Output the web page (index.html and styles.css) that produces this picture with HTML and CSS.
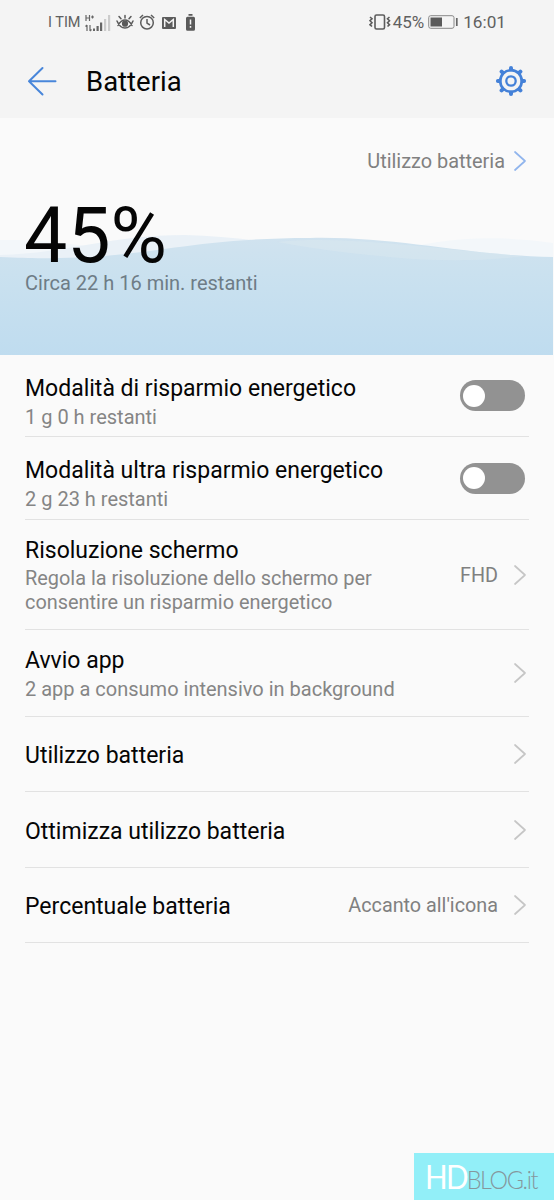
FILE: index.html
```html
<!DOCTYPE html>
<html lang="it">
<head>
<meta charset="utf-8">
<title>Batteria</title>
<link rel="stylesheet" href="styles.css">
</head>
<body>
<div class="screen">
  <header class="top">
    <div class="status">
      <div class="status-left">
        <span class="carrier">I TIM</span>
        <svg class="i-signal" width="26" height="18" viewBox="0 0 26 18"><g fill="none" stroke="#666" stroke-width="1.200"><path d="M1 1v6M4.500 1v6M1 4h3.500M6 3h3M7.500 1.500v3M2 11v6M.5 12.500 2 11M5 11v6M6.500 15.500 5 17"/></g><path fill="#666" d="M8 14.500h2V17H8zM11.500 12h2.200v5h-2.200zM15 8.500h2.200V17H15z"/><path fill="#ccc" d="M19 5h2.200v12H19zM23 1h2.200v16H23z"/></svg>
        <svg class="i-eye" width="18" height="16" viewBox="0 0 18 16"><g fill="none" stroke="#5a5a5a" stroke-width="1.500" stroke-linecap="round"><path d="M1 7q3 7 8 7t8-7M2 11.500Q5 6 9 6t7 5.500M9 4V1.500M5 4.800 3 2.500M13 4.800 15 2.500"/></g><circle cx="9" cy="9.700" r="3.100" fill="#5a5a5a"/></svg>
        <svg class="i-alarm" width="16" height="16" viewBox="0 0 16 16"><g fill="none" stroke="#5c5c5c" stroke-width="1.500"><circle cx="8" cy="8.700" r="6.300"/><path d="M8 5v4.200l3 1.800M.8 4 4 1M15.200 4 12 1"/></g></svg>
        <svg class="i-mail" width="14" height="12" viewBox="0 0 14 12"><rect width="14" height="12" rx="1" fill="#5c5c5c"/><path d="M2.700 10V2.500L7 6l4.300-3.500V10" fill="none" stroke="#f4f4f4" stroke-width="1.500"/></svg>
        <svg class="i-bat" width="9" height="17" viewBox="0 0 9 17"><path fill="#5a5a5a" d="M2.500 0h4v1.800h-4zM1.500 2.700h6q1.500 0 1.500 1.500v11q0 1.500-1.500 1.500h-6Q0 16.700 0 15.200v-11q0-1.500 1.500-1.500z"/><path stroke="#f4f4f4" stroke-width="1.500" d="M4.500 5.500v5M4.500 12v1.700"/></svg>
      </div>
      <div class="status-right">
        <svg class="i-vib" width="22" height="16" viewBox="0 0 22 16"><g fill="none" stroke="#5c5c5c" stroke-width="1.600"><rect x="6" y="1" width="9.500" height="14" rx="1.500"/><path d="M1 3l2 1.700-2 2 2 2-2 2 2 1.800M20.500 3l-2 1.700 2 2-2 2 2 2-2 1.800"/></g></svg>
        <span class="pct">45%</span>
        <svg class="i-level" width="30" height="14" viewBox="0 0 30 14"><rect x=".7" y=".7" width="25.300" height="12.600" rx="2" fill="none" stroke="#888"/><rect x="2.500" y="2.500" width="11.500" height="9" fill="#5a5a5a"/><path d="M28.800 3v8" stroke="#666" stroke-width="1.700"/></svg>
        <span class="clock">16:01</span>
      </div>
    </div>
    <div class="bar">
      <svg class="i-back" width="30" height="30" viewBox="0 0 30 30"><path d="M15.500 2 2 15.200 15.500 28.500M2 15.200h26.500" fill="none" stroke="#4886da" stroke-width="2" stroke-linecap="round" stroke-linejoin="round"/></svg>
      <h1>Batteria</h1>
      <svg class="i-gear" width="32" height="32" viewBox="-16 -16 32 32"><g fill="none" stroke="#4481d8"><circle r="10.800" stroke-width="2.700"/><circle r="4.700" stroke-width="2.300"/><path stroke-width="4" stroke-linecap="round" d="M0-11.500v-1.600M0 11.500v1.600M-11.500 0h-1.600M11.500 0h1.600M-8.300-8.300l-1.100-1.100M8.300-8.300l1.100-1.100M-8.300 8.300l-1.100 1.100M8.300 8.300l1.100 1.100"/></g></svg>
    </div>
  </header>

  <section class="hero">
    <svg class="waves" width="553" height="125" viewBox="0 0 553 125">
      <defs><linearGradient id="sea" x1="0" y1="0" x2="0" y2="125" gradientUnits="userSpaceOnUse"><stop offset="0" stop-color="#d2e3ef"/><stop offset=".35" stop-color="#cae1ef"/><stop offset="1" stop-color="#bfdcef"/></linearGradient></defs>
      <path fill="#f3f7fa" d="M0 10C60 9 100 20 160 24H380C440 8 490 4 553 13V40H0z"/>
      <path fill="#eaf1f7" d="M0 25C70 23 110 5 185 5C225 6 260 11 300 16V40H0z"/>
      <path fill="url(#sea)" d="M0 27C25 28 35 28.500 60 28C150 27 190 8 310 8C395 6 470 26 553 27V125H0z"/>
      <path fill="#dce9f0" opacity=".45" d="M277 12C350 5 430 19 525 26Q460 34 390 27Q330 22 277 12z"/>
    </svg>
    <a class="usage"><span>Utilizzo batteria</span><svg class="chev blue" width="14" height="22" viewBox="0 0 14 22"><path d="M2 2l10 9-10 9"/></svg></a>
    <div class="level">45%</div>
    <div class="remaining">Circa 22 h 16 min. restanti</div>
  </section>

  <main class="list">
    <div class="row r1"><div class="text"><h2>Modalità di risparmio energetico</h2><p>1 g 0 h restanti</p></div><span class="toggle"></span></div>
    <div class="row r2"><div class="text"><h2>Modalità ultra risparmio energetico</h2><p>2 g 23 h restanti</p></div><span class="toggle"></span></div>
    <div class="row r3"><div class="text"><h2>Risoluzione schermo</h2><p>Regola la risoluzione dello schermo per<br>consentire un risparmio energetico</p></div><span class="value">FHD</span><svg class="chev" width="14" height="22" viewBox="0 0 14 22"><path d="M2 2l10 9-10 9"/></svg></div>
    <div class="row r4"><div class="text"><h2>Avvio app</h2><p>2 app a consumo intensivo in background</p></div><svg class="chev" width="14" height="22" viewBox="0 0 14 22"><path d="M2 2l10 9-10 9"/></svg></div>
    <div class="row r5"><div class="text"><h2>Utilizzo batteria</h2></div><svg class="chev" width="14" height="22" viewBox="0 0 14 22"><path d="M2 2l10 9-10 9"/></svg></div>
    <div class="row r5"><div class="text"><h2>Ottimizza utilizzo batteria</h2></div><svg class="chev" width="14" height="22" viewBox="0 0 14 22"><path d="M2 2l10 9-10 9"/></svg></div>
    <div class="row r5"><div class="text"><h2>Percentuale batteria</h2></div><span class="value">Accanto all'icona</span><svg class="chev" width="14" height="22" viewBox="0 0 14 22"><path d="M2 2l10 9-10 9"/></svg></div>
  </main>

  <div class="brand"><div class="wordmark"><span class="hd">HD</span><span class="blog">BLOG.it</span></div></div>
</div>
</body>
</html>
```
FILE: styles.css
```css
* { box-sizing: border-box; }
body { margin: 0; background: #fafafa; font-family: Roboto, "Liberation Sans", sans-serif; color: #050505; }
.screen { position: relative; width: 554px; height: 1200px; overflow: hidden; }
svg { display: block; flex: none; }
h1, h2, p { margin: 0; font-weight: 400; }

.top { height: 118px; background: #f4f4f4; }
.status { height: 44px; display: flex; justify-content: space-between; padding: 0 48px; color: #606060; }
.status-left, .status-right { display: flex; align-items: center; white-space: nowrap; padding-top: 1px; }
.status-right { padding-top: 0; padding-bottom: 1px; }
.carrier { font-size: 14.5px; width: 37px; }
.i-eye { margin-left: 5px; margin-bottom: 1px; }
.i-alarm { margin-left: 5px; margin-bottom: 2px; }
.i-mail { margin-left: 7px; }
.i-bat { margin-left: 10px; }
.pct { font-size: 17px; margin-left: 2px; }
.i-level { margin-left: 4px; }
.clock { font-size: 17.2px; margin-left: 5px; }

.bar { display: flex; align-items: center; height: 74px; padding: 0 27px; }
.bar h1 { flex: 1; margin-left: 29px; font-size: 27.5px; line-height: 32px; padding-top: 1px; }
.i-back { margin-bottom: 1px; }
.i-gear { margin-bottom: 1px; }

.hero { position: relative; height: 237px; padding: 32px 25px 0; }
.waves { position: absolute; left: 0; bottom: 0; }
.usage, .level, .remaining { position: relative; }
.usage { display: flex; justify-content: flex-end; align-items: center; height: 22px; gap: 8px; font-size: 19.9px; color: #808080; padding-right: 2px; }
.level { height: 76px; margin-top: 26px; margin-left: -1px; font-size: 77px; line-height: 77px; }
.remaining { font-size: 20px; line-height: 24px; margin-top: -3px; color: #6e7c86; }

.chev { fill: none; stroke: #c6c6c6; stroke-width: 1.7; stroke-linecap: round; stroke-linejoin: round; }
.blue { stroke: #91b5ed; }

.list { padding: 0 25px; }
.row { display: flex; align-items: center; border-bottom: 1px solid #e2e2e2; padding-right: 2px; }
.text { flex: 1; white-space: nowrap; padding-top: 2px; }
.row h2 { font-size: 23px; line-height: 28px; }
.row p { font-size: 20px; line-height: 24px; color: #858585; }
.row h2 + p { margin-top: 2px; }
.r1 { height: 82px; }
.r2 { height: 83px; }
.r1 .text { padding-top: 13px; }
.r2 .text { padding-top: 11px; }
.r3 { height: 110px; }
.r3 .text { padding-top: 2px; }
.r3 p { font-size: 19.9px; }
.r4 { height: 87px; }
.r4 .text { padding-top: 2px; }
.r5 { height: 75.4px; }
.r5 .text { padding-top: 4px; }
.value { font-size: 19.8px; color: #808080; margin-right: 15px; padding-top: 2px; }
.toggle { width: 65px; height: 31px; margin-right: 2px; border-radius: 16px; background: #929292; padding: 4.5px 3px; }
.toggle::before { content: ""; display: block; width: 22px; height: 22px; border-radius: 50%; background: #fff; }

.brand { position: absolute; right: 0; bottom: 0; width: 140px; height: 47px; padding-left: 11px; background: #92eff8; }
.wordmark { display: flex; align-items: baseline; font-family: Lato, sans-serif; font-weight: 300; line-height: 46px; white-space: nowrap; transform: scaleX(.9); transform-origin: left; }
.hd { font-size: 33px; color: #fff; font-weight: 400; letter-spacing: -2px; }
.blog { font-size: 26px; color: #85979d; letter-spacing: -1.5px; }
```
